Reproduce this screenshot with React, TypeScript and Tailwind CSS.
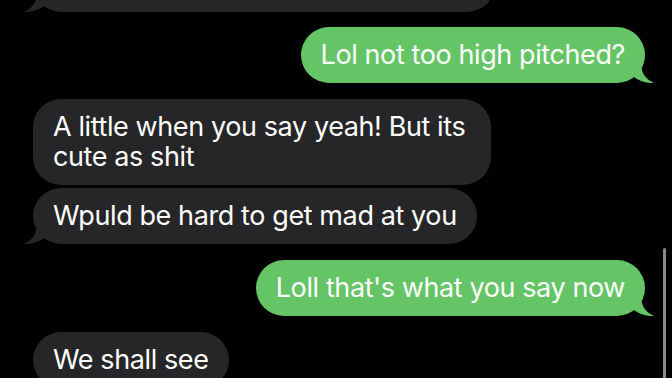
import React from "react";

type Msg = { text: React.ReactNode; me: boolean; tail?: boolean; mt: string };

const messages: Msg[] = [
  { text: "Lol not too high pitched?", me: true, tail: true, mt: "mt-[15px]" },
  { text: "A little when you say yeah! But its cute as shit", me: false, mt: "mt-[16px]" },
  { text: "Wpuld be hard to get mad at you", me: false, tail: true, mt: "mt-[3px]" },
  { text: "Loll that's what you say now", me: true, tail: true, mt: "mt-[16px]" },
  { text: "We shall see", me: false, mt: "mt-[16px]" },
];

const Tail = ({ me }: { me: boolean }) =>
  me ? (
    <svg
      className="absolute bottom-0 right-[-9px] w-[22px] h-[20px]"
      viewBox="0 0 22 20"
    >
      <path d="M0 0 H9 C9 9 13 16 22 20 C14 20.5 7 18 2 14 Z" fill="#65c466" />
    </svg>
  ) : (
    <svg
      className="absolute bottom-0 left-[-9px] w-[22px] h-[20px]"
      viewBox="0 0 22 20"
    >
      <path d="M22 0 H13 C13 9 9 16 0 20 C8 20.5 15 18 20 14 Z" fill="#262628" />
    </svg>
  );

const Bubble = ({ msg }: { msg: Msg }) => (
  <div className={`flex ${msg.me ? "justify-end" : "justify-start"} ${msg.mt}`}>
    <div
      className={`relative max-w-[458px] rounded-[28px] px-[20px] py-[13px] text-[27px] leading-[30px] tracking-[-0.4px] text-white ${
        msg.me ? "bg-[#65c466]" : "bg-[#262628]"
      }`}
    >
      {msg.text}
      {msg.tail && <Tail me={msg.me} />}
    </div>
  </div>
);

export default function App() {
  return (
    <div
      className="relative w-[672px] h-[378px] overflow-hidden bg-black"
      style={{ fontFamily: "Inter, 'Liberation Sans', sans-serif" }}
    >
      <div className="flex flex-col pl-[33px] pr-[27px]">
        <div className="flex justify-start mt-[-44px]">
          <div className="relative w-[462px] h-[56px] rounded-[28px] bg-[#262628]">
            <Tail me={false} />
          </div>
        </div>
        {messages.map((m, i) => (
          <Bubble key={i} msg={m} />
        ))}
      </div>
      <div className="absolute right-[6px] top-[248px] w-[3px] h-[140px] rounded-full bg-[#8a8a8e]" />
    </div>
  );
}
